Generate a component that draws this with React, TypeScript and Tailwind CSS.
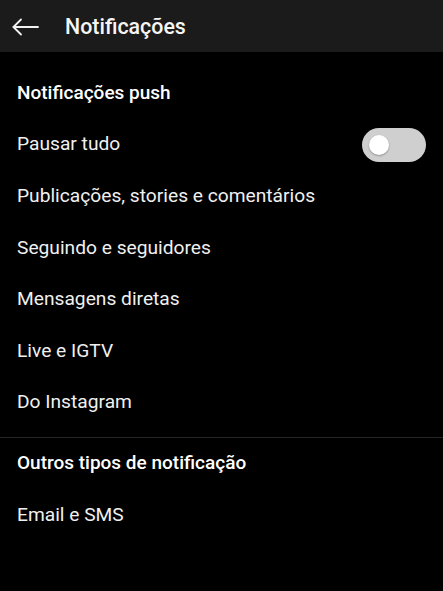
import React from 'react'

const pushItems = [
    'Publicações, stories e comentários',
    'Seguindo e seguidores',
    'Mensagens diretas',
    'Live e IGTV',
    'Do Instagram',
]

export default function App() {
    return (
        <div className="w-[443px] h-[591px] bg-black text-white font-['Roboto',sans-serif] overflow-hidden">
            {/* Barra superior */}
            <header className="h-[52px] bg-[#1b1b1b] flex items-center">
                <div className="w-[65px] flex items-center pl-[12px] pt-[2px]">
                    <svg width="27" height="18" viewBox="0 0 27 18" fill="none" stroke="#f2f2f2" strokeWidth="1.8" strokeLinecap="round" strokeLinejoin="round">
                        <path d="M26 9H1.5" />
                        <path d="M9 1.5L1.5 9L9 16.5" />
                    </svg>
                </div>
                <h1 className="text-[21.4px] font-medium text-[#f5f5f5] pt-[2px]">Notificações</h1>
            </header>

            <div className="pt-[15px]">
                <div className="h-[52px] flex items-center px-[17px]">
                    <h2 className="text-[19px] font-medium">Notificações push</h2>
                </div>

                <div className="h-[51.6px] flex items-center justify-between px-[17px]">
                    <span className="text-[19.2px] text-[#f0f0f0]">Pausar tudo</span>
                    <div className="w-[64px] h-[34px] rounded-full bg-[#cfcfcf] flex items-center px-[7px]">
                        <div className="w-[20px] h-[20px] rounded-full bg-white shadow-[0_1px_2px_rgba(0,0,0,0.3)]" />
                    </div>
                </div>

                {pushItems.map((item) => (
                    <div key={item} className="h-[51.6px] flex items-center px-[17px]">
                        <span className="text-[19.2px] text-[#f0f0f0]">{item}</span>
                    </div>
                ))}

                <div className="mt-[8px] border-t border-[#262626]" />

                <div className="h-[52px] flex items-center px-[17px]">
                    <h2 className="text-[19px] font-medium">Outros tipos de notificação</h2>
                </div>
                <div className="h-[51.6px] flex items-center px-[17px]">
                    <span className="text-[19.2px] text-[#f0f0f0]">Email e SMS</span>
                </div>
            </div>
        </div>
    )
}
